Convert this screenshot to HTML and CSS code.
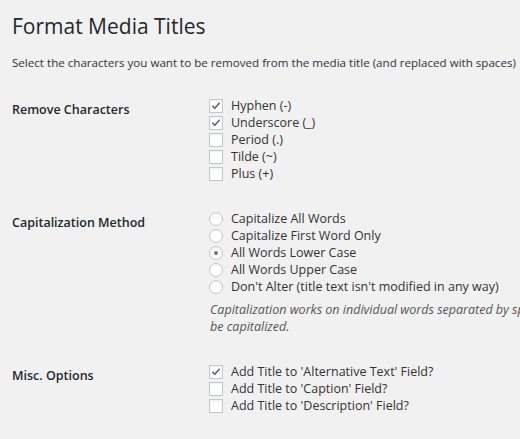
FILE: index.html
```html
<!DOCTYPE html>
<html>
<head>
<meta charset="utf-8">
<link rel="stylesheet" href="styles.css">
</head>
<body>
<div class="wrap">
  <h1 class="title">Format Media Titles</h1>
  <p class="intro">Select the characters you want to be removed from the media title (and replaced with spaces)</p>

  <div class="row row-remove">
    <div class="label">Remove Characters</div>
    <div class="field">
      <div class="opt"><span class="box"><svg viewBox="0 0 12 12"><path d="M2.3 5.8 L4.8 8.3 L9.6 2.8"/></svg></span>Hyphen (-)</div>
      <div class="opt"><span class="box"><svg viewBox="0 0 12 12"><path d="M2.3 5.8 L4.8 8.3 L9.6 2.8"/></svg></span>Underscore (_)</div>
      <div class="opt"><span class="box"></span>Period (.)</div>
      <div class="opt"><span class="box"></span>Tilde (~)</div>
      <div class="opt"><span class="box"></span>Plus (+)</div>
    </div>
  </div>

  <div class="row row-cap">
    <div class="label">Capitalization Method</div>
    <div class="field">
      <div class="opt"><span class="radio"></span>Capitalize All Words</div>
      <div class="opt"><span class="radio"></span>Capitalize First Word Only</div>
      <div class="opt"><span class="radio on"></span>All Words Lower Case</div>
      <div class="opt"><span class="radio"></span>All Words Upper Case</div>
      <div class="opt"><span class="radio"></span>Don't Alter (title text isn't modified in any way)</div>
      <p class="note">Capitalization works on individual words separated by spaces. Some words, such as those with apostrophes, will not<br>be capitalized.</p>
    </div>
  </div>

  <div class="row row-misc">
    <div class="label">Misc. Options</div>
    <div class="field">
      <div class="opt"><span class="box"><svg viewBox="0 0 12 12"><path d="M2.3 5.8 L4.8 8.3 L9.6 2.8"/></svg></span>Add Title to 'Alternative Text' Field?</div>
      <div class="opt"><span class="box"></span>Add Title to 'Caption' Field?</div>
      <div class="opt"><span class="box"></span>Add Title to 'Description' Field?</div>
    </div>
  </div>
</div>
</body>
</html>
```

FILE: styles.css
```css
html, body {
  margin: 0;
  padding: 0;
  background: #f1f1f1;
  overflow: hidden;
}
body {
  font-family: "Open Sans", "Noto Sans", sans-serif;
  font-size: 12.5px;
  color: #444;
  width: 520px;
  height: 439px;
}
.wrap {
  padding: 11px 0 0 12px;
  white-space: nowrap;
}
.title {
  margin: 0;
  font-size: 21px;
  line-height: 30px;
  font-weight: 400;
  color: #23282d;
}
.intro {
  margin: 13px 0 0;
  font-size: 11.6px;
  line-height: 17px;
  color: #333;
}
.row {
  display: flex;
}
.row-remove { margin-top: 26px; }
.row-cap { margin-top: 28px; }
.row-misc { margin-top: 28px; }
.label {
  width: 198px;
  flex: none;
  font-weight: 600;
  color: #23282d;
  line-height: 17px;
  padding-top: 4px;
}
.field {
  flex: none;
}
.opt {
  display: flex;
  align-items: center;
  height: 17px;
  line-height: 17px;
  color: #333;
}
.box {
  width: 12px;
  height: 12px;
  border: 1px solid #c4c8cc;
  background: #fff;
  box-shadow: inset 0 1px 2px rgba(0,0,0,0.07);
  margin: 0 8px 0 -1px;
  flex: none;
  display: flex;
}
.box svg {
  width: 12px;
  height: 12px;
}
.box path {
  fill: none;
  stroke: #666;
  stroke-width: 1.6;
}
.radio {
  width: 12px;
  height: 12px;
  border: 1px solid #c4c8cc;
  border-radius: 50%;
  background: #fff;
  box-shadow: inset 0 1px 2px rgba(0,0,0,0.07);
  margin: 0 8px 0 -1px;
  flex: none;
  display: flex;
  align-items: center;
  justify-content: center;
}
.radio.on::before {
  content: "";
  width: 4px;
  height: 4px;
  border-radius: 50%;
  background: #777;
}
.note {
  margin: 6px 0 0;
  font-style: italic;
  color: #555;
  line-height: 17px;
}
```
